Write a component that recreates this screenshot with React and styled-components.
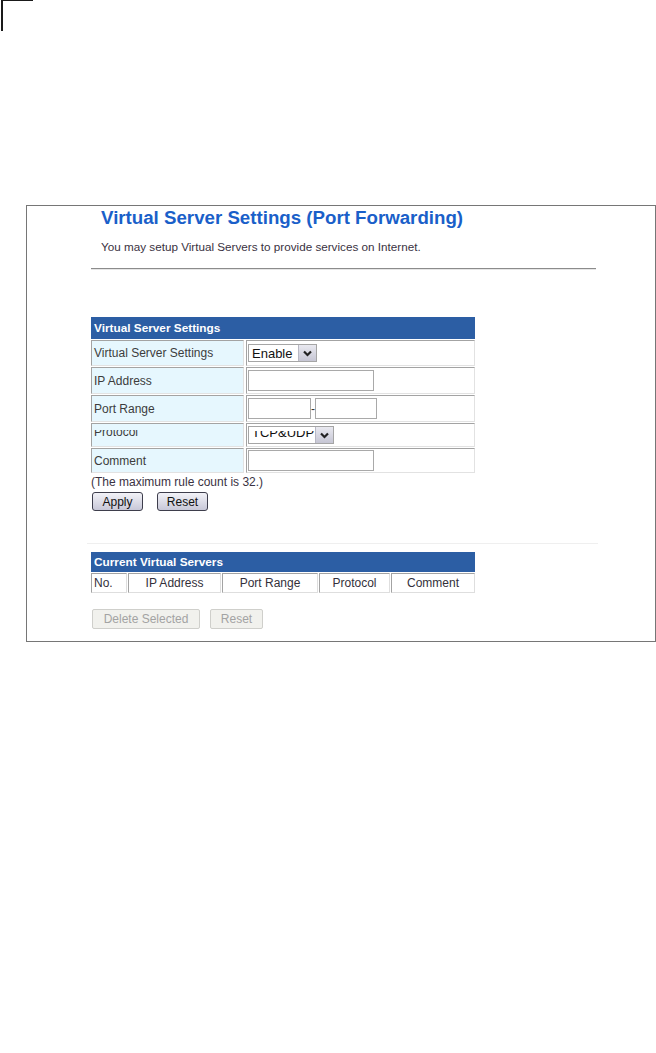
import React from 'react'
import styled, { css, createGlobalStyle } from 'styled-components'

const GlobalStyle = createGlobalStyle`
  body {
    margin: 0;
    background: #fff;
    font-family: "Liberation Sans", Arial, sans-serif;
  }
`

function Chevron() {
  return (
    <svg width="9" height="7" viewBox="0 0 9 7">
      <path d="M1 1.5 L4.5 5 L8 1.5" fill="none" stroke="#222" strokeWidth="2.2" />
    </svg>
  )
}

function FakeSelect({ value, width, clipped }) {
  return (
    <Select style={{ width }}>
      <SelectText $clipped={clipped}>{value}</SelectText>
      <SelectArrow><Chevron /></SelectArrow>
    </Select>
  )
}

const columns = [
  { name: 'No.', w: 36, left: true },
  { name: 'IP Address', w: 93 },
  { name: 'Port Range', w: 96 },
  { name: 'Protocol', w: 71 },
  { name: 'Comment', w: 84 },
]

export default function App() {
  const settingsRows = [
    { label: 'Virtual Server Settings', h: 26, field: <FakeSelect value="Enable" width={69} /> },
    { label: 'IP Address', h: 27, field: <TextBox $w={126} /> },
    {
      label: 'Port Range',
      h: 27,
      field: (
        <>
          <TextBox $w={63} />
          <Dash>-</Dash>
          <TextBox $w={62} />
        </>
      ),
    },
    { label: 'Protocol', h: 24, clipped: true, field: <FakeSelect value="TCP&UDP" width={86} clipped /> },
    { label: 'Comment', h: 25, field: <TextBox $w={126} /> },
  ]

  return (
    <>
      <GlobalStyle />
      <Corner />
      <Frame>
        <Title>Virtual Server Settings (Port Forwarding)</Title>
        <Intro>You may setup Virtual Servers to provide services on Internet.</Intro>
        <Rule />

        <SettingsTable>
          <TableHead>Virtual Server Settings</TableHead>
          {settingsRows.map((r) => (
            <Row key={r.label} style={{ height: r.h }}>
              <LabelCell $clipped={r.clipped}>
                <LabelText $clipped={r.clipped}>{r.label}</LabelText>
              </LabelCell>
              <ValueCell>{r.field}</ValueCell>
            </Row>
          ))}
        </SettingsTable>

        <Note>(The maximum rule count is 32.)</Note>
        <Buttons $gap={14} $top={3}>
          <Button>Apply</Button>
          <Button>Reset</Button>
        </Buttons>

        <FaintRule />

        <ListTable>
          <TableHead $h={20}>Current Virtual Servers</TableHead>
          <ListRow>
            {columns.map((c) => (
              <ListCell key={c.name} $w={c.w} $left={c.left}>
                {c.name}
              </ListCell>
            ))}
          </ListRow>
        </ListTable>

        <Buttons $gap={10} $top={16}>
          <DisabledButton $w={108}>Delete Selected</DisabledButton>
          <DisabledButton $w={53}>Reset</DisabledButton>
        </Buttons>
      </Frame>
    </>
  )
}

// the scan cut off the top of the Protocol row's text
const clipTop = css`
  display: flex;
  align-items: flex-end;
  height: 9px;
  overflow: hidden;
`

const Corner = styled.div`
  width: 30px;
  height: 30px;
  margin-left: 1px;
  border-top: 1px solid #1a1a1a;
  border-left: 2px solid #1a1a1a;
`

const Frame = styled.div`
  box-sizing: border-box;
  width: 630px;
  height: 437px;
  margin: 174px 0 0 26px;
  border: 1px solid #767676;
  padding: 1px 0 0 64px;
`

const Title = styled.h1`
  margin: 0 0 0 10px;
  font-size: 18.7px;
  line-height: 22px;
  font-weight: bold;
  color: #1a5fc9;
`

const Intro = styled.p`
  margin: 11px 0 0 10px;
  font-size: 11.7px;
  line-height: 14px;
  color: #3a3242;
`

const Rule = styled.div`
  width: 505px;
  height: 1px;
  margin-top: 14px;
  background: #8c8c8c;
  border-bottom: 1px solid #e6e6e6;
`

const SettingsTable = styled.div`
  width: 384px;
  margin-top: 47px;
  display: flex;
  flex-direction: column;
  gap: 1px;
`

const TableHead = styled.div`
  height: ${(p) => p.$h || 22}px;
  line-height: ${(p) => p.$h || 22}px;
  padding-left: 3px;
  background: #2c5ea4;
  color: #fff;
  font-size: 11.8px;
  font-weight: bold;
`

const Row = styled.div`
  display: grid;
  grid-template-columns: 153px 1fr;
  column-gap: 2px;
`

const Cell = styled.div`
  box-sizing: border-box;
  display: flex;
  align-items: center;
  overflow: hidden;
  border-style: solid;
  border-width: 1px;
  border-color: #a3a3a3 #e2e2e2 #e2e2e2 #a3a3a3;
`

const LabelCell = styled(Cell)`
  padding-left: 2px;
  background: #e6f7fe;
  font-size: 12px;
  color: #3c3c3c;
  align-items: ${(p) => (p.$clipped ? 'flex-start' : 'center')};
`

const LabelText = styled.span`
  line-height: 14px;
  ${(p) =>
    p.$clipped &&
    css`
      ${clipTop}
      margin-top: 6px;
    `}
`

const ValueCell = styled(Cell)`
  padding-left: 1px;
  background: #fff;
`

const TextBox = styled.div`
  box-sizing: border-box;
  width: ${(p) => p.$w}px;
  height: 21px;
  border: 1px solid #a9a9a9;
  background: #fff;
`

const Dash = styled.span`
  width: 4px;
  font-size: 12px;
  color: #333;
  text-align: center;
`

const Select = styled.div`
  box-sizing: border-box;
  height: 18px;
  display: flex;
  align-items: center;
  border: 1px solid #a5a5a5;
  background: #fff;
  overflow: hidden;
`

const SelectText = styled.span`
  flex: 1;
  padding-left: 3px;
  font-size: 13px;
  line-height: 15px;
  color: #111;
  white-space: nowrap;
  ${(p) => p.$clipped && clipTop}
`

const SelectArrow = styled.span`
  width: 17px;
  height: 16px;
  display: flex;
  align-items: center;
  justify-content: center;
  border-left: 1px solid #b8b8c4;
  background: linear-gradient(#e9e9f0, #c6c6d4);
`

const Note = styled.div`
  margin-top: 2px;
  font-size: 12px;
  line-height: 14px;
  color: #3a3242;
`

const Buttons = styled.div`
  display: flex;
  gap: ${(p) => p.$gap}px;
  margin: ${(p) => p.$top}px 0 0 1px;
`

const Button = styled.button`
  box-sizing: border-box;
  width: 51px;
  height: 19px;
  padding: 0;
  border: 1px solid #3e3e4c;
  border-radius: 3px;
  background: linear-gradient(#f2f2f7, #c8c8d8);
  font-family: "Liberation Sans", Arial, sans-serif;
  font-size: 12px;
  color: #111;
`

const DisabledButton = styled.button`
  box-sizing: border-box;
  width: ${(p) => p.$w}px;
  height: 20px;
  padding: 0;
  border: 1px solid #cfcfcb;
  border-radius: 2px;
  background: #f1f1ed;
  font-family: "Liberation Sans", Arial, sans-serif;
  font-size: 12px;
  color: #a3a3a3;
`

const FaintRule = styled.div`
  width: 511px;
  height: 1px;
  margin: 32px 0 0 -4px;
  background: #efefef;
`

const ListTable = styled.div`
  width: 384px;
  margin-top: 8px;
  display: flex;
  flex-direction: column;
  gap: 1px;
`

const ListRow = styled.div`
  display: flex;
  gap: 1px;
`

const ListCell = styled(Cell)`
  width: ${(p) => p.$w}px;
  height: 20px;
  justify-content: ${(p) => (p.$left ? 'flex-start' : 'center')};
  padding-left: ${(p) => (p.$left ? '2px' : '0')};
  font-size: 12px;
  color: #33303a;
  border-color: #a3a3a3 #dedede #dedede #a3a3a3;
`
